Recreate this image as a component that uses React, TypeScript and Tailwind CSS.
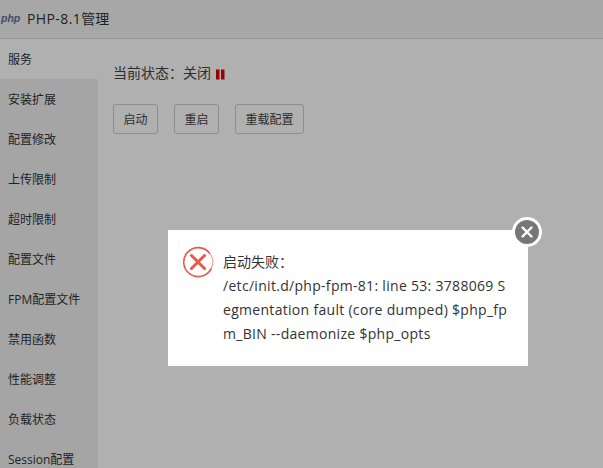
const menu = ['服务', '安装扩展', '配置修改', '上传限制', '超时限制', '配置文件', 'FPM配置文件', '禁用函数', '性能调整', '负载状态', 'Session配置']

const font = "font-['Open_Sans','Noto_Sans_CJK_SC',sans-serif]"

export default function App() {
  return (
    <div className={`relative h-[468px] w-[603px] overflow-hidden bg-white text-[#555] ${font}`}>
      {/* page under the shade */}
      <div className="flex h-[39px] items-center border-b border-[#ddd] bg-[#f2f2f2]">
        <span className="w-[27px] pl-px font-['Liberation_Sans',sans-serif] text-[10.5px] font-bold italic text-[#5b6f9e]">php</span>
        <span className="text-sm text-[#333]">
          <span className="tracking-[0.4px]">PHP-8.1</span>管理
        </span>
      </div>
      <div className="flex">
        <div className="h-[429px] w-[98px] shrink-0 bg-[#f0f0f0]">
          {menu.map((item, i) => (
            <div key={item} className={`flex h-10 items-center pl-2 pt-[2px] text-xs text-[#333] ${i === 0 ? 'bg-white' : ''}`}>
              {item}
            </div>
          ))}
        </div>
        <div className="pl-[15px] pt-[26px]">
          <div className="flex h-[18px] items-center text-sm text-[#444]">
            <span className="-mt-[2px]">当前状态：关闭</span>
            <svg className="ml-[5px]" width="9" height="11" viewBox="0 0 9 11">
              <rect x="0" y="0.5" width="3.5" height="10" fill="#e00000" />
              <rect x="5" y="0.5" width="3.5" height="10" fill="#e00000" />
            </svg>
          </div>
          <div className="mt-[21px] flex gap-4">
            {['启动', '重启', '重载配置'].map((label) => (
              <button key={label} className="h-[30px] rounded-[3px] border border-[#ccc] px-[9.5px] pt-[2px] text-xs text-[#444]">
                {label}
              </button>
            ))}
          </div>
        </div>
      </div>

      {/* shade */}
      <div className="absolute inset-0 bg-black/[0.31]" />

      {/* dialog */}
      <div className="absolute left-[168px] top-[230px] flex h-[136px] w-[360px] bg-white pl-[14px] pt-5">
        <svg className="-mt-1 shrink-0" width="32" height="32" viewBox="0 0 32 32" fill="none" stroke="#e8584f">
          <path d="M27.5 7A14.5 14.5 0 1 0 29 23" strokeWidth="1.6" strokeLinecap="round" />
          <path d="M29 23A14.5 14.5 0 0 0 27.5 7" strokeWidth="0.7" />
          <path d="M9.5 9.5 22.5 22.5M22.5 9.5 9.5 22.5" strokeWidth="3" strokeLinecap="round" />
        </svg>
        <div className="ml-[9px] w-[286px] break-all text-sm leading-6 text-[#333]">
          启动失败：
          <br />
          <span className="tracking-[0.3px]">/etc/init.d/php-fpm-81: line 53: 3788069 Segmentation fault (core dumped) $php_fpm_BIN --daemonize $php_opts</span>
        </div>
        <button className="absolute left-[344px] top-[-13px] flex h-[30px] w-[30px] items-center justify-center rounded-full border-[3px] border-white bg-[#777]">
          <svg width="14" height="14" viewBox="0 0 14 14" stroke="#fff" strokeWidth="2.4" strokeLinecap="round">
            <path d="M2.5 2.5 11.5 11.5M11.5 2.5 2.5 11.5" />
          </svg>
        </button>
      </div>
    </div>
  )
}
